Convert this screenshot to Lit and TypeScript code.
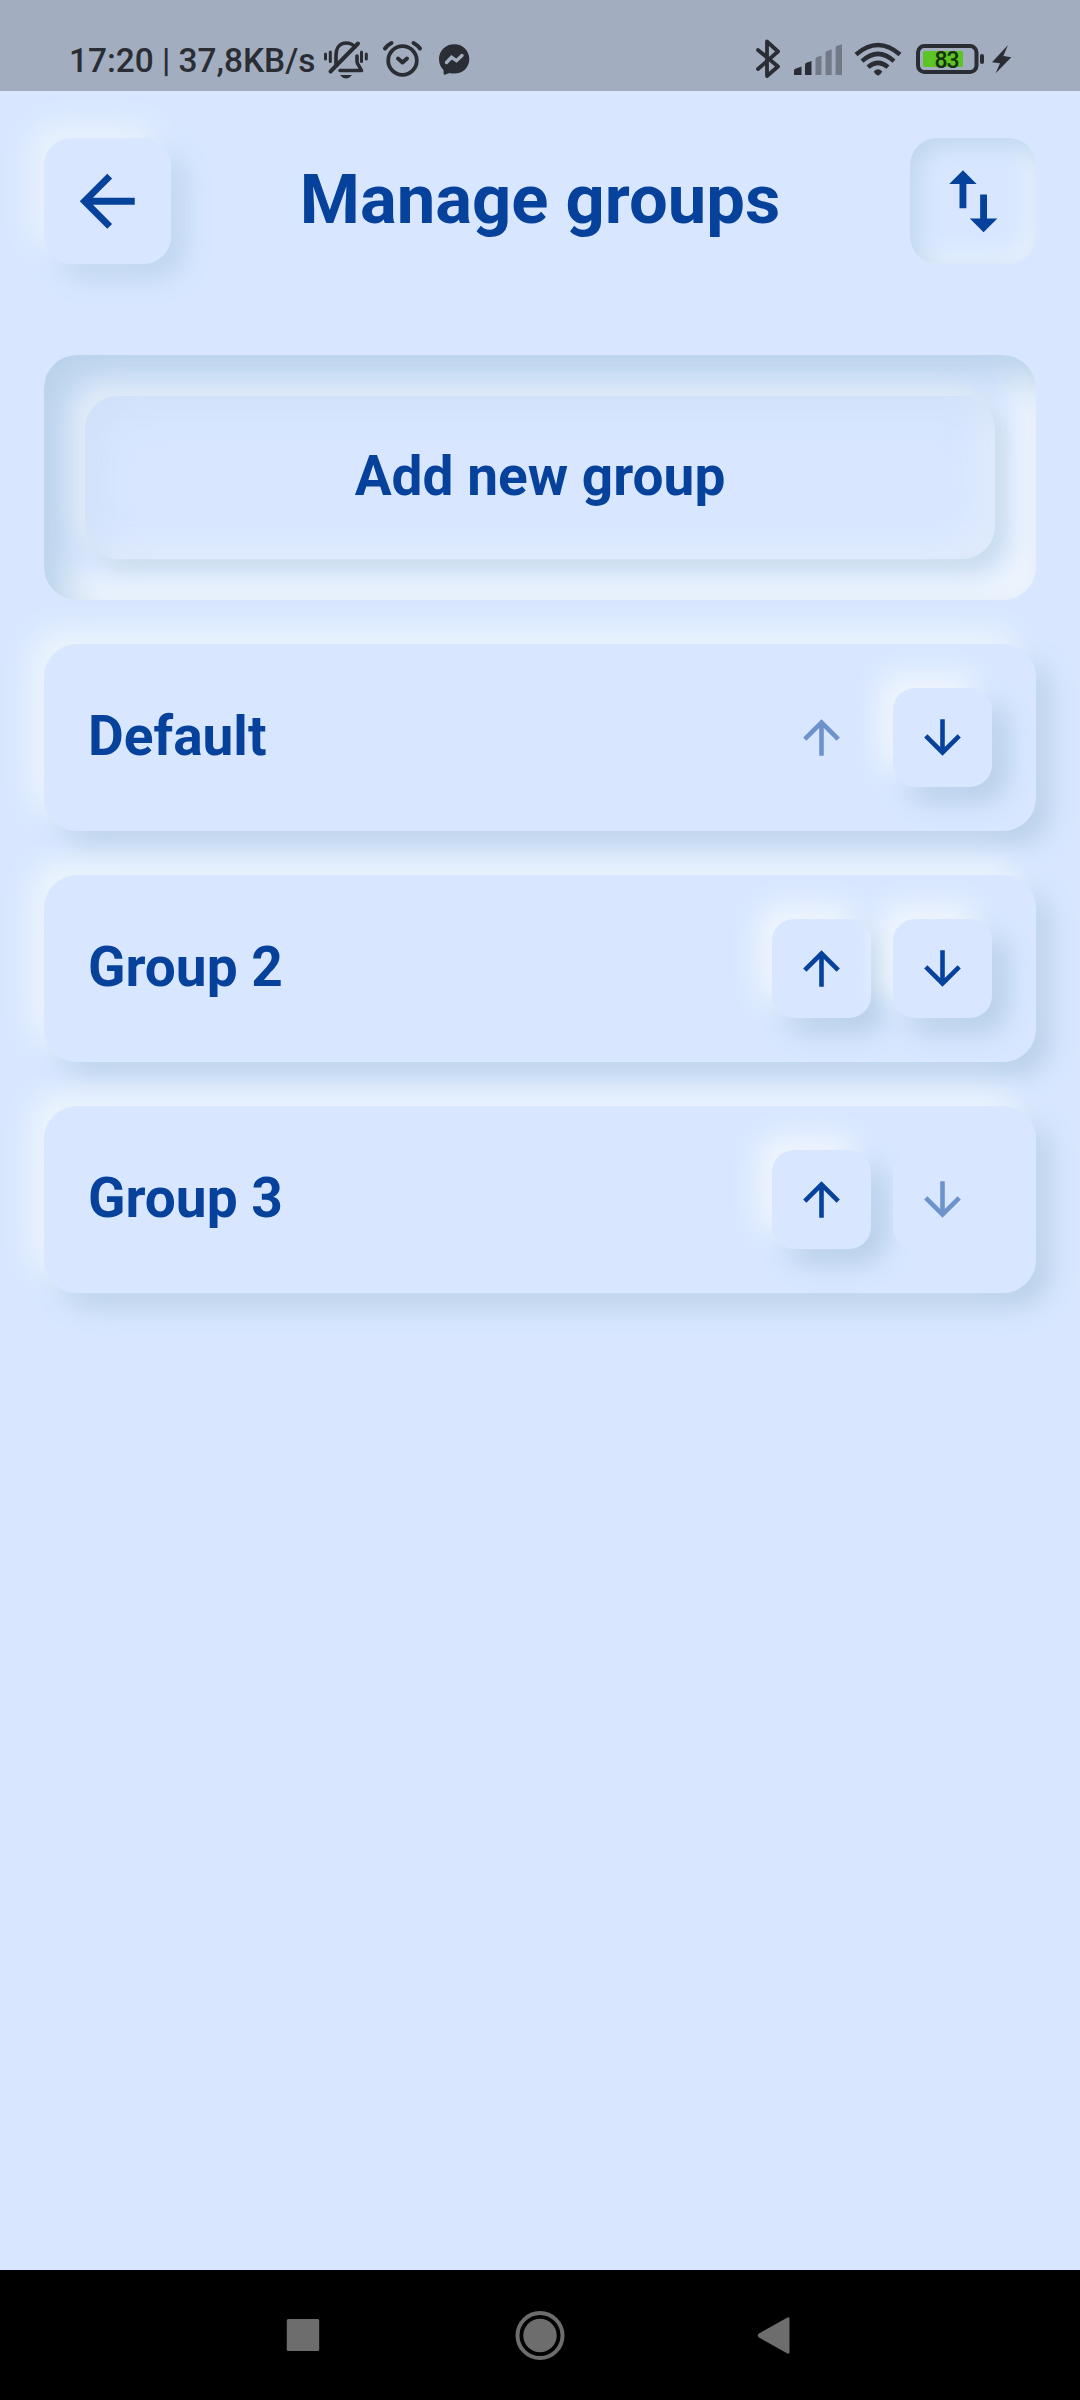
import { LitElement, html, css, svg } from "lit";
import { customElement, property } from "lit/decorators.js";
import { classMap } from "lit/directives/class-map.js";

const ARROWS: Record<string, string> = {
  back: "M20 11H7.83l5.59-5.59L12 4l-8 8 8 8 1.41-1.41L7.83 13H20v-2z",
  up: "M4 12l1.41 1.41L11 7.83V20h2V7.83l5.58 5.59L20 12l-8-8-8 8z",
  down: "M20 12l-1.41-1.41L13 16.17V4h-2v12.17l-5.58-5.59L4 12l8 8 8-8z",
  swap: "M16 17.01V10h-2v7.01h-3L15 21l4-3.99h-3zM9 3L5 6.99h3V14h2V6.99h3L9 3z",
};

const icon = (name: string) =>
  html`<svg viewBox="0 0 24 24">${svg`<path d=${ARROWS[name]}></path>`}</svg>`;

@customElement("status-bar")
class StatusBar extends LitElement {
  static styles = css`
    :host {
      display: block;
      background: #a2aebf;
    }
    .bar {
      display: flex;
      height: 91px;
      box-sizing: border-box;
      padding: 36px 64px 0 69px;
      color: #2a2d34;
    }
    .clock {
      width: 251px;
      font: 500 33.400px/49px Roboto, sans-serif;
      white-space: nowrap;
    }
    svg {
      display: block;
      height: 46px;
      flex: none;
      fill: none;
      stroke: #2a2d34;
      stroke-linecap: round;
      stroke-linejoin: round;
    }
    .solid {
      fill: #2a2d34;
      stroke: none;
    }
    .faded {
      fill: #727a89;
      stroke: none;
    }
    .cut {
      stroke: #a2aebf;
    }
    .charge {
      fill: #5cc425;
      stroke: none;
    }
    .level {
      fill: #17300d;
      stroke: none;
      font: 500 23px Roboto, sans-serif;
    }
    .left,
    .right {
      display: flex;
    }
    .right {
      margin-left: auto;
    }
  `;
  render() {
    return html`<div class="bar">
      <div class="left">
        <span class="clock">17:20 | 37,8KB/s</span>
        <svg width="56" viewBox="320 36 56 46">
          <path
            stroke-width="3.6"
            d="M336 64V56C336 47.500 340 43 346 43C350 43 353 44.500 355 47M357 56V61Q357 64 359 66L361.500 70.500H340"
          ></path>
          <path stroke-width="4" d="M330.500 71.500L358 43.500"></path>
          <path stroke-width="3" d="M325.500 54V59M330.300 52V61.500M361.500 52V61.500M366.300 54V59"></path>
          <path class="solid" d="M340 75H352C350 77.500 348 78.500 346 78.500C344 78.500 342 77.500 340 75Z"></path>
        </svg>
        <svg width="54" viewBox="376 36 54 46">
          <circle cx="402.500" cy="60.500" r="14.300" stroke-width="3.800"></circle>
          <path stroke-width="4" d="M398 58.500L402.500 62.500L407 58.500"></path>
          <path stroke-width="4" d="M385 48.500Q387.500 45 391.500 43M413.500 43Q417.500 45 420 48.500"></path>
        </svg>
        <svg width="44" viewBox="430 36 44 46">
          <path
            class="solid"
            d="M454.300 44.200C462.900 44.200 469.300 50.500 469.300 59C469.300 67.500 462.900 73.500 454.300 73.500C452.500 73.500 451 73.300 449.500 72.900L445.500 74.600C444.500 75 443.700 74.500 443.600 73.500L443.500 70C440.700 67.300 439 63.500 439 59C439 50.500 445.700 44.200 454.300 44.200Z"
          ></path>
          <path class="cut" stroke-width="3.400" stroke-linejoin="miter" d="M446.500 62.500L451.500 57.300L456.500 60.700L462 55.500"></path>
        </svg>
      </div>
      <div class="right">
        <svg width="38" viewBox="752 36 38 46">
          <path stroke-width="3.800" d="M758 50L778 66.500L767 76V41.500L778 51.500L758 69"></path>
        </svg>
        <svg width="62" viewBox="790 36 62 46">
          <path
            class="solid"
            d="M794 75V70.500Q794 69 796 68.500L801.500 66.500V75ZM805 75V64.500Q805 63 807 62.500L811.500 61V75Z"
          ></path>
          <path
            class="faded"
            d="M815.500 75V59Q815.500 57.500 817 57L821.500 55.500V75ZM825.500 75V53Q825.500 51.500 827 51L831.700 49.500V75ZM835.600 75V48Q835.600 46.300 837 45.700L842 44.300V75Z"
          ></path>
        </svg>
        <svg width="62" viewBox="852 36 62 46">
          <path stroke-width="4.400" stroke-linecap="butt" d="M856 54.500Q878 35.500 900 54.500"></path>
          <path stroke-width="4.400" stroke-linecap="butt" d="M862 61.200Q878 46.500 894 61.200"></path>
          <path stroke-width="4.400" stroke-linecap="butt" d="M868 67.200Q878 58.500 888 67.200"></path>
          <path class="solid" d="M873.800 71.500Q878 67 882.200 71.500Q881 74.500 878 75.800Q875 74.500 873.800 71.500Z"></path>
        </svg>
        <svg width="74" viewBox="914 36 74 46">
          <rect x="918" y="46" width="58.500" height="26" rx="6.500" stroke-width="4"></rect>
          <rect class="charge" x="923" y="51" width="40" height="16" rx="1.500"></rect>
          <rect class="solid" x="980" y="54" width="4" height="10" rx="2"></rect>
          <text class="level" x="934.500" y="67.700" textLength="25">83</text>
        </svg>
        <svg width="28" viewBox="988 36 28 46">
          <path class="solid" d="M1008 45L992 62.300L1000 63.300L995.500 73.500L1011.300 57.200L1003.300 56Z"></path>
        </svg>
      </div>
    </div>`;
  }
}

@customElement("group-card")
class GroupCard extends LitElement {
  @property() name = "";
  @property({ type: Boolean }) first = false;
  @property({ type: Boolean }) last = false;

  static styles = css`
    :host {
      display: flex;
      align-items: center;
      justify-content: space-between;
      box-sizing: border-box;
      height: 187px;
      padding: 0 44px;
      border-radius: 33px;
      background: #d8e7ff;
      box-shadow: -14px -14px 28px #ecf4fd, 14px 14px 28px #b8d0e8;
    }
    .name {
      font: 700 55px/64px Roboto, sans-serif;
      color: #06419b;
      padding-bottom: 4px;
    }
    .moves {
      display: flex;
      gap: 22px;
    }
    .move {
      display: flex;
      align-items: center;
      justify-content: center;
      width: 99px;
      height: 99px;
      border-radius: 22px;
      background: #d8e7ff;
      box-shadow: -14px -14px 28px #f0f6fd, 14px 14px 28px #b4cde7;
    }
    .move.off {
      box-shadow: none;
    }
    svg {
      width: 55px;
      height: 55px;
      fill: #06419b;
    }
    .off svg {
      opacity: 0.5;
    }
  `;
  render() {
    return html`<span class="name">${this.name}</span>
      <div class="moves">
        <div class=${classMap({ move: true, off: this.first })}>${icon("up")}</div>
        <div class=${classMap({ move: true, off: this.last })}>${icon("down")}</div>
      </div>`;
  }
}

@customElement("nav-bar")
class NavBar extends LitElement {
  static styles = css`
    :host {
      display: flex;
      align-items: center;
      justify-content: space-between;
      box-sizing: border-box;
      height: 130px;
      padding: 0 278px;
      background: #000;
    }
    svg {
      display: block;
      width: 50px;
      height: 50px;
      fill: #6d6d6d;
    }
    .ring {
      fill: none;
      stroke: #6d6d6d;
      stroke-width: 4;
    }
  `;
  render() {
    return html`<svg viewBox="0 0 50 50"><rect x="8.800" y="9" width="32.400" height="32" rx="1.500"></rect></svg>
      <svg viewBox="0 0 50 50">
        <circle class="ring" cx="25" cy="25.500" r="22.500"></circle>
        <circle cx="25" cy="25.500" r="16.700"></circle>
      </svg>
      <svg viewBox="0 0 50 50">
        <path d="M35 7.700Q37.500 6.300 37.500 9V42Q37.500 44.700 35 43.300L7 27.500Q4.500 25.500 7 23.500Z"></path>
      </svg>`;
  }
}

@customElement("app-root")
class AppRoot extends LitElement {
  static styles = css`
    :host {
      display: flex;
      flex-direction: column;
      height: 2400px;
      overflow: hidden;
      background: #d8e7ff;
      font-family: Roboto, sans-serif;
      color: #06419b;
    }
    .header {
      display: flex;
      align-items: center;
      justify-content: space-between;
      padding: 46.500px 44px 0;
    }
    .title {
      margin: 0;
      font: 700 68.750px/80px Roboto, sans-serif;
      padding-bottom: 2px;
    }
    .square {
      display: flex;
      align-items: center;
      justify-content: center;
      width: 126.500px;
      height: 126.500px;
      border-radius: 27.500px;
    }
    .raised {
      box-shadow: -14px -14px 28px #e9f2fd, 14px 14px 28px #bdd5ee;
      background: #d8e7ff;
    }
    .sunken {
      box-shadow: inset 8px 8px 22px #bfd6ed, inset -8px -8px 22px #e9f2fd;
    }
    .square svg {
      width: 82.500px;
      height: 82.500px;
      fill: #06419b;
    }
    .main {
      flex: 1;
      display: flex;
      flex-direction: column;
      gap: 44px;
      padding: 91px 44px 0;
    }
    .tray {
      box-sizing: border-box;
      height: 245px;
      padding: 41px;
      border-radius: 33px;
      box-shadow: inset 20px 20px 36px #b9d2ea, inset -22px -22px 36px #f0f6fd;
    }
    .add {
      display: flex;
      align-items: center;
      justify-content: center;
      height: 163px;
      border-radius: 33px;
      background: #d8e7ff;
      font: 700 55px/64px Roboto, sans-serif;
      box-shadow: -9px -9px 22px rgba(228, 238, 245, 0.800), 9px 9px 22px rgba(190, 212, 228, 0.700),
        inset 12px 12px 40px rgba(190, 212, 236, 0.350), inset -14px -14px 32px rgba(232, 240, 253, 0.700);
    }
    .add span {
      padding-bottom: 4px;
    }
  `;
  render() {
    const groups = ["Default", "Group 2", "Group 3"];
    return html`<status-bar></status-bar>
      <div class="header">
        <div class="square raised">${icon("back")}</div>
        <h1 class="title">Manage groups</h1>
        <div class="square sunken">${icon("swap")}</div>
      </div>
      <div class="main">
        <div class="tray"><div class="add"><span>Add new group</span></div></div>
        ${groups.map(
          (g, i) => html`<group-card .name=${g} .first=${i === 0} .last=${i === groups.length - 1}></group-card>`
        )}
      </div>
      <nav-bar></nav-bar>`;
  }
}
